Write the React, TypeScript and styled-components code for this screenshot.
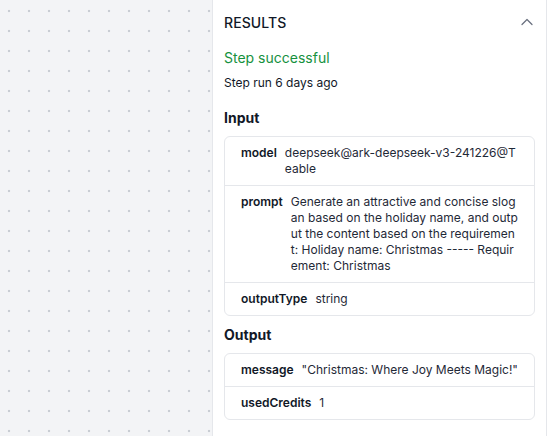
import React from "react";
import styled, { createGlobalStyle } from "styled-components";
import { ChevronUp } from "lucide-react";

const Global = createGlobalStyle`
  html, body { margin: 0; padding: 0; background: #ffffff; }
  body { font-family: Inter, "Noto Sans", "Liberation Sans", sans-serif; color: #111827; }
  * { box-sizing: border-box; }
`;

const Page = styled.div`
  display: flex;
  width: 548px;
  height: 436px;
  overflow: hidden;
  background: #ffffff;
`;

const Canvas = styled.div`
  width: 212px;
  flex: none;
  height: 100%;
  background-color: #f3f4f6;
  background-image: radial-gradient(circle at 9px 11px, #c9cdd3 1.3px, transparent 1.6px);
  background-size: 20px 20px;
`;

const Panel = styled.aside`
  width: 335px;
  flex: none;
  height: 100%;
  border-left: 1px solid #e5e7eb;
  border-right: 1px solid #e5e7eb;
  padding: 12px 11px 0;
  display: flex;
  flex-direction: column;
`;

const Header = styled.div`
  display: flex;
  align-items: center;
  justify-content: space-between;
  height: 20px;
`;

const Title = styled.span`
  font-size: 14px;
  font-weight: 500;
  letter-spacing: 0.1px;
  color: #111827;
`;

const Toggle = styled.span`
  display: flex;
  color: #6b7280;
  margin-right: -2px;
`;

const Status = styled.div`
  margin-top: 16px;
  font-size: 14px;
  line-height: 20px;
  color: #16913e;
`;

const Meta = styled.div`
  margin-top: 7px;
  font-size: 12px;
  line-height: 16px;
  color: #111827;
`;

const SectionTitle = styled.h3<{ $first?: boolean }>`
  margin: ${(p) => (p.$first ? "17px" : "9px")} 0 8px;
  font-size: 14px;
  line-height: 20px;
  font-weight: 700;
  color: #111827;
`;

const Card = styled.div`
  border: 1px solid #e5e7eb;
  border-radius: 6px;
  display: flex;
  flex-direction: column;
`;

const Row = styled.div`
  display: flex;
  gap: 8px;
  padding: 8px 16px;
  font-size: 12px;
  line-height: 16px;
  & + & {
    border-top: 1px solid #e5e7eb;
  }
`;

const Key = styled.span`
  flex: none;
  font-weight: 600;
  color: #111827;
`;

const Value = styled.span`
  flex: 1;
  min-width: 0;
  color: #1f2937;
  word-break: break-all;
`;

type Entry = { k: string; v: string };

const input: Entry[] = [
  { k: "model", v: "deepseek@ark-deepseek-v3-241226@Teable" },
  {
    k: "prompt",
    v: "Generate an attractive and concise slogan based on the holiday name, and output the content based on the requirement: Holiday name: Christmas ----- Requirement: Christmas",
  },
  { k: "outputType", v: "string" },
];

const output: Entry[] = [
  { k: "message", v: '"Christmas: Where Joy Meets Magic!"' },
  { k: "usedCredits", v: "1" },
];

const KV = ({ items }: { items: Entry[] }) => (
  <Card>
    {items.map((e) => (
      <Row key={e.k}>
        <Key>{e.k}</Key>
        <Value>{e.v}</Value>
      </Row>
    ))}
  </Card>
);

export default function App() {
  return (
    <>
      <Global />
      <Page>
        <Canvas />
        <Panel>
          <Header>
            <Title>RESULTS</Title>
            <Toggle>
              <ChevronUp size={20} strokeWidth={1.5} />
            </Toggle>
          </Header>
          <Status>Step successful</Status>
          <Meta>Step run 6 days ago</Meta>
          <SectionTitle $first>Input</SectionTitle>
          <KV items={input} />
          <SectionTitle>Output</SectionTitle>
          <KV items={output} />
        </Panel>
      </Page>
    </>
  );
}
